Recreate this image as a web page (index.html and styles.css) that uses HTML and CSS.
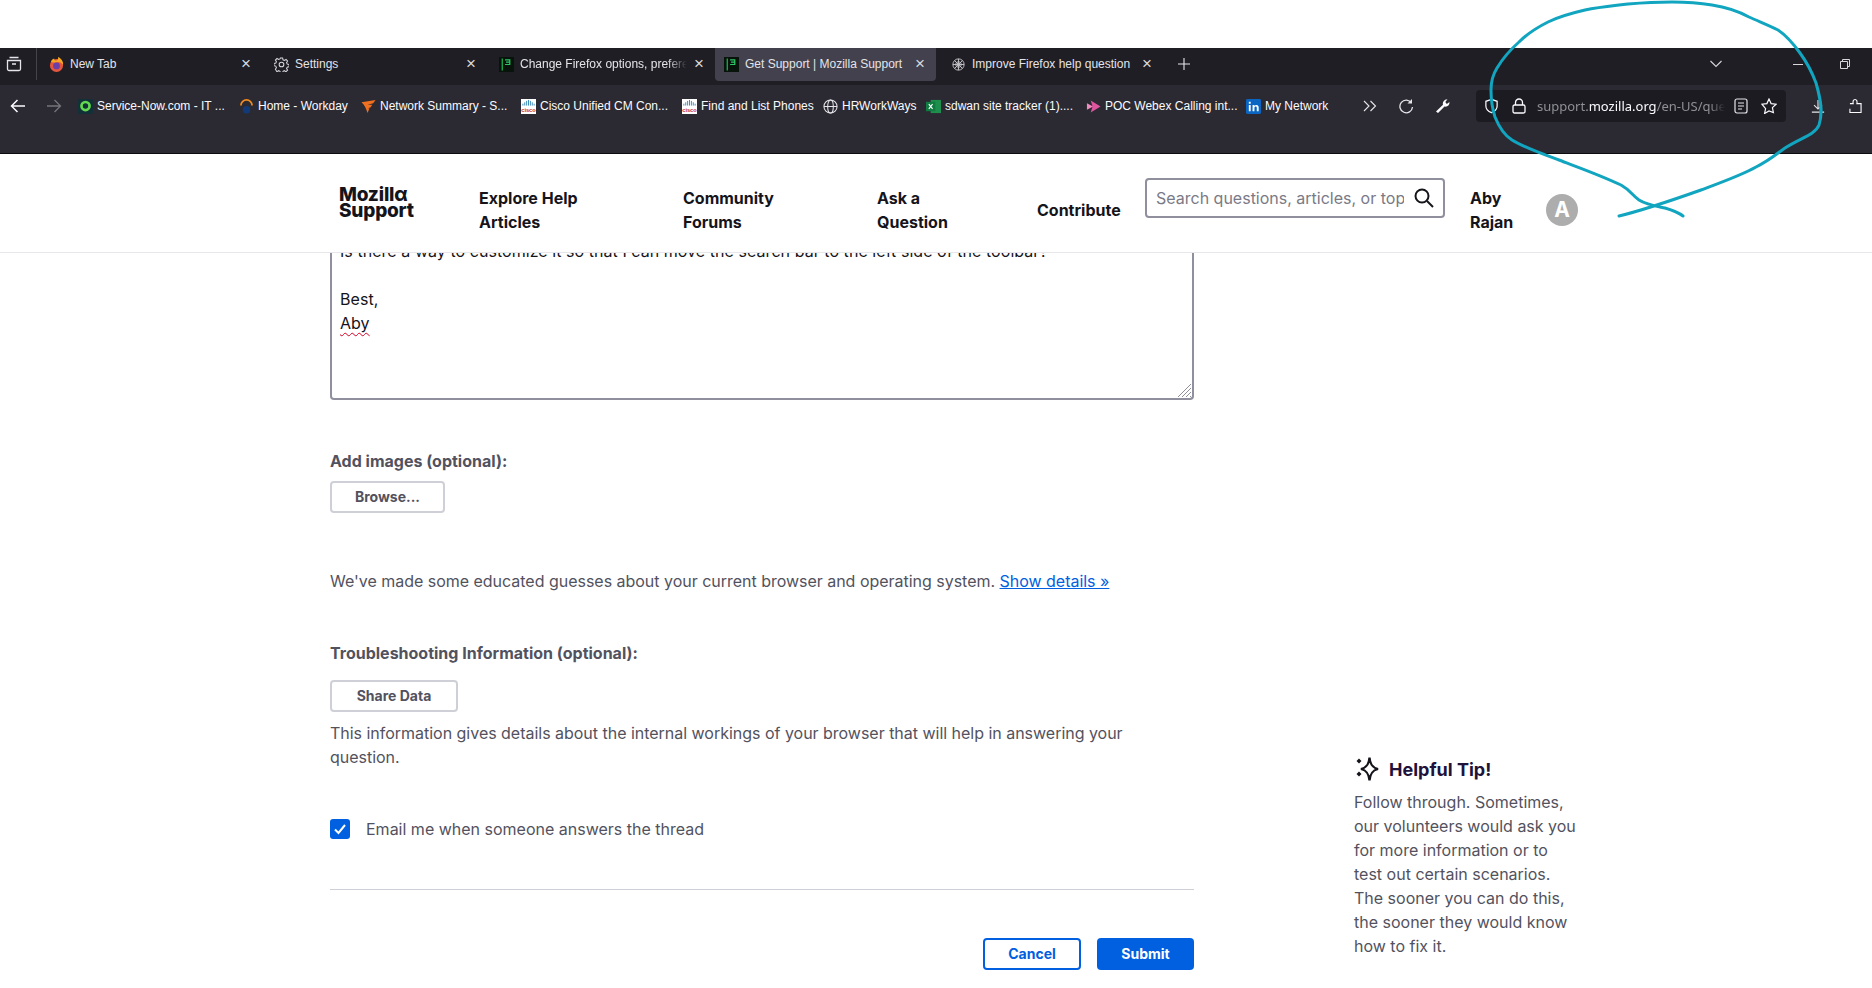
FILE: index.html
```html
<!DOCTYPE html>
<html lang="en">
<head>
<meta charset="utf-8">
<title>Get Support | Mozilla Support</title>
<link rel="stylesheet" href="styles.css">
</head>
<body>
<div class="shot-top"></div>
<div class="tabbar">
  <div class="tab-view">
    <svg class="ico16" viewBox="0 0 16 16" fill="none" stroke="#e6e6ea" stroke-width="1.3"><path d="M3.5 1.5h9M1.5 4.5h13v8.5a1.5 1.5 0 0 1-1.5 1.5H3A1.5 1.5 0 0 1 1.5 13zM6 8h4"/></svg>
  </div>
  <div class="tab t1">
    <svg class="fav" viewBox="0 0 16 16"><circle cx="8" cy="9" r="7" fill="#e4563d"/><path d="M2 5c.8-2 2-3 3.500-3.500C5.300 3 6.500 3.800 8 3.800c1 0 1.800-1.600 1.800-3.800 3 1.500 5.700 4.500 5.200 8.500C13.500 6 11 4.800 8 5.500 5 6 3 6 2 5z" fill="#f5a623"/><circle cx="8" cy="9.500" r="3.600" fill="#6a3fa8"/></svg>
    <span class="tab-title">New Tab</span><span class="tab-x">×</span>
  </div>
  <div class="tab t2">
    <svg class="fav" viewBox="0 0 16 16" fill="none" stroke="#d5d5da" stroke-width="1.100"><path d="M6.800 1h2.400l.4 2 1.500.7 1.800-1.100 1.600 1.700-1.100 1.700.7 1.600 2 .4v2.400l-2 .4-.7 1.500 1.100 1.800-1.700 1.600-1.700-1.100-1.500.7-.4 2H6.800l-.4-2-1.500-.7-1.800 1.100L1.500 13l1.100-1.700-.7-1.600-2-.4V6.900l2-.4.7-1.500L1.500 3.200l1.700-1.600L4.900 2.700l1.500-.7z"/><circle cx="8" cy="8" r="2.500"/></svg>
    <span class="tab-title">Settings</span><span class="tab-x">×</span>
  </div>
  <div class="tab t3">
    <svg class="fav" viewBox="0 0 16 16"><rect width="16" height="16" fill="#07130b"/><path d="M3.500 1.500v13" stroke="#19a34a" stroke-width="1.500"/><path d="M6.500 3h5v2.500h-4M11.500 5.500V8h-5" fill="none" stroke="#2fc766" stroke-width="1.300"/></svg>
    <span class="tab-title fade">Change Firefox options, prefere</span><span class="tab-x">×</span>
  </div>
  <div class="tab t4 active">
    <svg class="fav" viewBox="0 0 16 16"><rect width="16" height="16" fill="#07130b"/><path d="M3.500 1.500v13" stroke="#19a34a" stroke-width="1.500"/><path d="M6.500 3h5v2.500h-4M11.500 5.500V8h-5" fill="none" stroke="#2fc766" stroke-width="1.300"/></svg>
    <span class="tab-title">Get Support | Mozilla Support</span><span class="tab-x">×</span>
  </div>
  <div class="tab t5">
    <svg class="fav" viewBox="0 0 16 16" fill="none" stroke="#c4c4c9" stroke-width="1"><circle cx="8" cy="8" r="6"/><path d="M8 2v12M2 8h12M3.800 3.800l8.400 8.400M12.200 3.800l-8.400 8.400"/><circle cx="8" cy="8" r="3"/></svg>
    <span class="tab-title">Improve Firefox help question</span><span class="tab-x">×</span>
  </div>
  <svg class="tab-plus" viewBox="0 0 12 12" fill="none" stroke="#e6e6ea" stroke-width="1.100"><path d="M6 0v12M0 6h12"/></svg>
  <div class="tab-spacer"></div>
  <svg class="tab-chevron" viewBox="0 0 12 8" fill="none" stroke="#d6d6db" stroke-width="1.100"><path d="M.5 1l5.500 5.500L11.500 1"/></svg>
  <div class="win-min"></div>
  <svg class="win-restore" viewBox="0 0 10 10" fill="none" stroke="#d6d6db" stroke-width="1"><path d="M.5 2.500h7v7h-7zM2.500 2.500v-2h7v7h-2"/></svg>
</div>

<div class="toolbar">
  <svg class="nav-ico back" viewBox="0 0 16 16" fill="none" stroke="#fbfbfe" stroke-width="1.500"><path d="M15 8H1.500M7.500 2l-6 6 6 6"/></svg>
  <svg class="nav-ico fwd" viewBox="0 0 16 16" fill="none" stroke="#75747b" stroke-width="1.300"><path d="M1 8h13.500M8.500 2l6 6-6 6"/></svg>
  <div class="bookmarks">
    <div class="bm b1">
      <svg class="fav" viewBox="0 0 16 16"><rect width="16" height="16" rx="1.500" fill="#123038"/><circle cx="8" cy="7.500" r="4.300" fill="none" stroke="#62d84e" stroke-width="2.900"/></svg>
      <span>Service-Now.com - IT ...</span>
    </div>
    <div class="bm b2">
      <svg class="fav" viewBox="0 0 16 16"><path d="M2 7a6 6 0 0 1 12 0" fill="none" stroke="#f38b1d" stroke-width="1.800"/><circle cx="8" cy="11.500" r="4" fill="#123a77"/></svg>
      <span>Home - Workday</span>
    </div>
    <div class="bm b3">
      <svg class="fav" viewBox="0 0 16 16"><path d="M.5 3.500l15-2.500-2.500 3.500-6 1.500 5 0-2 3-3 .8 2 0L7 15C5.500 10 3.500 6 .5 3.500z" fill="#f0701f"/></svg>
      <span>Network Summary - S...</span>
    </div>
    <div class="bm b4">
      <svg class="fav" viewBox="0 0 16 16"><rect width="16" height="16" fill="#fff"/><path d="M2 7V5M4 7V3.500M6 7V2M8 7V1M10 7V2M12 7V3.500M14 7V5" stroke="#3a86b5"/><text class="cisco-mark" x="8" y="13.500">cisco</text></svg>
      <span>Cisco Unified CM Con...</span>
    </div>
    <div class="bm b5">
      <svg class="fav" viewBox="0 0 16 16"><rect width="16" height="16" fill="#fff"/><path d="M2 7V5M4 7V3.500M6 7V2M8 7V1M10 7V2M12 7V3.500M14 7V5" stroke="#3a86b5"/><text class="cisco-mark" x="8" y="13.500">cisco</text></svg>
      <span>Find and List Phones</span>
    </div>
    <div class="bm b6">
      <svg class="fav" viewBox="0 0 16 16" fill="none" stroke="#e6e6ea" stroke-width="1.100"><circle cx="8" cy="8" r="7"/><ellipse cx="8" cy="8" rx="3" ry="7"/><path d="M1 8h14"/></svg>
      <span>HRWorkWays</span>
    </div>
    <div class="bm b7">
      <svg class="fav" viewBox="0 0 16 16"><rect x="5" y="1" width="11" height="14" fill="#1f8f4d"/><rect y="3" width="10" height="10" fill="#107c41"/><path d="M3 5.500l4 5M7 5.500l-4 5" stroke="#fff" stroke-width="1.200"/></svg>
      <span>sdwan site tracker (1)....</span>
    </div>
    <div class="bm b8">
      <svg class="fav" viewBox="0 0 16 16"><path d="M5 1.500l10.500 6.500L5 14.500l2-6.500z" fill="#e0559f"/><path d="M1 4.500L7.500 8 1 11.500z" fill="#f08bc0"/></svg>
      <span>POC Webex Calling int...</span>
    </div>
    <div class="bm b9">
      <svg class="fav" viewBox="0 0 16 16"><rect width="16" height="16" rx="1.500" fill="#0a66c2"/><path d="M3 6.500h2V13H3zM3 3h2v2H3zM7 6.500h2v1c.5-.8 1.300-1.200 2.200-1.200 1.500 0 2.300 1 2.300 2.700v4h-2V9.300c0-.8-.4-1.200-1-1.200-.7 0-1.500.4-1.500 1.500V13H7z" fill="#fff"/></svg>
      <span>My Network</span>
    </div>
  </div>
  <svg class="tool-ico chev" viewBox="0 0 14 12" fill="none" stroke="#e6e6ea" stroke-width="1.100"><path d="M1 1l5 5-5 5M7.500 1l5 5-5 5"/></svg>
  <svg class="tool-ico reload" viewBox="0 0 16 16" fill="none" stroke="#e6e6ea" stroke-width="1.300"><path d="M13.500 5A6.300 6.300 0 1 0 14.500 9"/><path d="M14 1v4.500H9.500" fill="#e6e6ea" stroke="none"/></svg>
  <svg class="tool-ico wrench" viewBox="0 0 16 16"><path d="M1 13.500L8 6.800C7.300 4.500 9 1.300 12.500 1.300L10.300 4l1.500 2 2.700-2c.2 3.500-2.500 5.200-5 4.500L3 15z" fill="#fbfbfe"/></svg>
  <div class="urlbar">
    <svg class="url-ico shield" viewBox="0 0 16 16" fill="none" stroke="#fbfbfe" stroke-width="1.300"><path d="M8 1l6 2v5c0 3.500-3 6-6 7-3-1-6-3.500-6-7V3z"/></svg>
    <svg class="url-ico lock" viewBox="0 0 14 16" fill="none" stroke="#fbfbfe" stroke-width="1.300"><rect x="1" y="7" width="12" height="8" rx="1.500"/><path d="M3.500 7V4.500a3.500 3.500 0 0 1 7 0V7"/></svg>
    <div class="url-text"><span class="url-dim">support.</span><span class="url-host">mozilla.org</span><span class="url-dim">/en-US/questions/new</span></div>
    <svg class="url-ico reader" viewBox="0 0 14 16" fill="none" stroke="#e6e6ea" stroke-width="1.200"><rect x="1" y="1" width="12" height="14" rx="2"/><path d="M4 5h6M4 8h6M4 11h4"/></svg>
    <svg class="url-ico star" viewBox="0 0 16 16" fill="none" stroke="#fbfbfe" stroke-width="1.200"><path d="M8 1l2.100 4.600 5 .6-3.700 3.400 1 4.900L8 13l-4.400 2.500 1-4.900L.9 6.200l5-.6z"/></svg>
  </div>
  <svg class="tool-ico dl" viewBox="0 0 16 16" fill="none" stroke="#e6e6ea" stroke-width="1.300"><path d="M8 1v10M3.500 7L8 11.500 12.500 7M1 15h14"/></svg>
  <svg class="tool-ico ext" viewBox="0 0 14 16" fill="none" stroke="#fbfbfe" stroke-width="1.200"><path d="M1 5.500h3.500C4 3 4.500 1 6.500 1s2.500 2 2 4.500H13V15H1V11"/></svg>
</div>

<header class="site-header">
  <a class="logo">Mozillα<br>Support</a>
  <nav class="nav-link n1">Explore Help<br>Articles</nav>
  <nav class="nav-link n2">Community<br>Forums</nav>
  <nav class="nav-link n3">Ask a<br>Question</nav>
  <nav class="nav-link n4">Contribute</nav>
  <div class="search">
    <div class="search-ph">Search questions, articles, or topics</div>
    <svg class="search-ico" viewBox="0 0 20 20" fill="none" stroke="#15141a" stroke-width="2"><circle cx="8" cy="8" r="6.500"/><path d="M13 13l6 6"/></svg>
  </div>
  <div class="nav-link user">Aby<br>Rajan</div>
  <div class="avatar">A</div>
</header>

<main class="page">
  <section class="form">
    <div class="textarea">
      <p>Is there a way to customize it so that I can move the search bar to the left side of the toolbar?</p>
      <p class="gap">Best,</p>
      <p><span class="spell">Aby</span></p>
      <svg class="grip" viewBox="0 0 14 14" stroke="#8f8f9d" stroke-width="1"><path d="M1 14L14 1M5 14l9-9M9 14l5-5M13 14l1-1"/></svg>
    </div>
    <h3 class="label add-images">Add images (optional):</h3>
    <button class="btn-light browse">Browse...</button>
    <p class="copy guesses">We've made some educated guesses about your current browser and operating system. <a class="link">Show details »</a></p>
    <h3 class="label trouble">Troubleshooting Information (optional):</h3>
    <button class="btn-light share">Share Data</button>
    <p class="copy info">This information gives details about the internal workings of your browser that will help in answering your question.</p>
    <div class="check-row">
      <span class="check"><svg viewBox="0 0 20 20" fill="none" stroke="#fff" stroke-width="2"><path d="M5 10.500l3.500 3.500L15 6"/></svg></span>
      <span class="check-label">Email me when someone answers the thread</span>
    </div>
    <hr class="rule">
    <div class="actions">
      <button class="btn-outline">Cancel</button>
      <button class="btn-primary">Submit</button>
    </div>
  </section>
  <aside class="tip">
    <div class="tip-head">
      <svg class="tip-ico" viewBox="0 0 26 26" fill="none" stroke="#15141a" stroke-width="2.300"><path d="M15.500 1.500c.6 6.500 2.500 10 8.500 11.500-6 1.500-7.900 5-8.500 11.500-.6-6.500-2.500-10-8.500-11.500 6-1.500 7.900-5 8.500-11.500z"/><path d="M5 2.500l2.500 2.500L5 7.500 2.500 5zM5 15.500l2.500 2.500L5 20.500 2.500 18z" fill="#15141a" stroke="none"/></svg>
      <h3 class="tip-title">Helpful Tip!</h3>
    </div>
    <p class="tip-text">Follow through. Sometimes, our volunteers would ask you for more information or to test out certain scenarios. The sooner you can do this, the sooner they would know how to fix it.</p>
  </aside>
</main>

<svg class="scribble" viewBox="0 0 1872 988" fill="none" stroke="#12a5c0" stroke-width="3" stroke-linecap="round" stroke-linejoin="round">
  <path d="M1619 216C1640 211 1670 201 1701 190C1725 181 1742 175 1756 167C1770 160 1775 155 1785 148C1800 138 1815 135 1819 125C1823 113 1821 100 1816 83C1812 72 1808 64 1800 53C1792 42 1787 36 1778 30C1768 25 1760 22 1749 17C1738 11 1725 7 1712 5C1700 3 1685 2 1672 2C1655 2 1640 3 1628 4C1612 6 1600 7 1585 10C1572 13 1560 16 1548 22C1538 27 1528 33 1519 42C1510 50 1503 58 1497 68C1492 76 1491 82 1491 90C1491 100 1492 108 1495 117C1499 127 1504 135 1512 140C1525 148 1540 153 1559 160C1580 168 1600 175 1621 185C1630 190 1632 195 1639 200C1647 205 1655 206 1665 208C1672 210 1678 212 1683 216"/>
</svg>
</body>
</html>
```
FILE: styles.css
```css
* { box-sizing: border-box; }
html, body { margin: 0; height: 988px; overflow: hidden; background: #fff; }
body { font-family: Inter, "Noto Sans", sans-serif; position: relative; }
h3, p { margin: 0; }

.shot-top { height: 48px; background: #fff; }

/* tab strip */
.tabbar {
  height: 37px; background: #1f1e25; display: flex; align-items: center; padding-bottom: 5px;
  color: #e4e4e8; font: 12px/16px "Liberation Sans", Arial, sans-serif;
}
.tab-view { width: 37px; height: 32px; border-right: 1px solid #45444c; display: flex; align-items: center; padding-left: 6px; }
.ico16 { width: 16px; height: 16px; }
.fav { width: 15px; height: 15px; flex: none; }
.cisco-mark { font: 700 6px "Liberation Sans", Arial, sans-serif; fill: #c0272d; text-anchor: middle; }
.tab { height: 32px; display: flex; align-items: center; padding-left: 12px; gap: 6px; position: relative; flex: none; }
.t1 { width: 225px; }
.t2 { width: 225px; }
.t3 { width: 228px; }
.t4 { width: 221px; height: 33px; padding-left: 9px; gap: 6px; background: #42414d; border-radius: 0 0 4px 4px; }
.t5 { width: 224px; margin-left: 3px; padding-left: 12px; }
.tab-title { flex: 1; white-space: nowrap; overflow: hidden; min-width: 0; }
.fade { -webkit-mask-image: linear-gradient(to right, #000 88%, transparent); mask-image: linear-gradient(to right, #000 88%, transparent); }
.tab-x { width: 12px; margin-right: 10px; font-size: 17px; text-align: center; color: #d8d8dc; }
.tab-plus { width: 12px; height: 12px; margin-left: 15px; }
.tab-spacer { flex: 1; }
.tab-chevron { width: 12px; height: 8px; margin-right: 71px; }
.win-min { width: 10px; height: 1px; background: #d6d6db; margin-right: 37px; }
.win-restore { width: 10px; height: 10px; margin-right: 22px; }

/* toolbar */
.toolbar {
  height: 69px; background: #2b2a33; border-bottom: 1px solid #0c0c0d;
  display: flex; align-items: flex-start; padding-top: 5px;
  color: #fbfbfe; font: 12px/32px "Liberation Sans", Arial, sans-serif;
}
.nav-ico, .tool-ico, .url-ico { flex: none; margin-top: 8px; height: 16px; }
.nav-ico { width: 16px; }
.back { margin-left: 10px; }
.fwd { margin-left: 20px; }
.bookmarks { display: flex; margin-left: 16px; width: 1290px; flex: none; }
.bm { display: flex; align-items: center; gap: 4px; height: 32px; white-space: nowrap; flex: none; }
.bm span { display: block; }
.b1 { width: 161px; }
.b2 { width: 122px; }
.b3 { width: 160px; }
.b4 { width: 161px; }
.b5 { width: 141px; }
.b6 { width: 103px; }
.b7 { width: 160px; }
.b8 { width: 160px; }
.chev { width: 14px; margin-left: -5px; }
.reload { width: 16px; margin-left: 21px; }
.wrench { width: 16px; margin-left: 21px; }
.urlbar {
  width: 310px; height: 32px; margin-left: 25px; background: #1c1b22; border-radius: 4px;
  display: flex; align-items: flex-start; padding-left: 8px; flex: none;
}
.shield { width: 15px; }
.lock { width: 14px; margin-left: 13px; }
.url-text { width: 188px; margin-left: 11px; overflow: hidden; white-space: nowrap; font: 13px/32px "Noto Sans", sans-serif; -webkit-mask-image: linear-gradient(to right, #000 92%, transparent); mask-image: linear-gradient(to right, #000 92%, transparent); }
.url-dim { color: #8f8f96; }
.url-host { color: #fbfbfe; }
.reader { width: 14px; margin-left: 9px; }
.star { width: 16px; margin-left: 13px; }
.dl { width: 14px; margin-left: 25px; }
.ext { width: 13px; margin-left: 24px; }

/* site header */
.site-header {
  height: 99px; border-bottom: 1px solid #e6e6eb; background: #fff; position: relative; z-index: 2;
  display: flex; align-items: center; padding: 13px 0 0 339px;
}
.logo { font-size: 19px; line-height: 16px; font-weight: 800; color: #15141a; width: 140px; margin-top: -14px; letter-spacing: -.2px; }
.nav-link { font-size: 16px; line-height: 24px; font-weight: 650; color: #15141a; flex: none; }
.n1 { width: 204px; }
.n2 { width: 194px; }
.n3 { width: 160px; }
.n4 { width: 108px; }
.search {
  width: 300px; height: 40px; margin-top: -24px; border: 2px solid #8f8f9d; border-radius: 4px;
  display: flex; align-items: center; padding-left: 9px; flex: none;
}
.search-ph { width: 248px; overflow: hidden; white-space: nowrap; font-size: 16px; color: #7a7a86; }
.search-ico { width: 20px; height: 20px; margin-left: 10px; }
.user { margin-left: 25px; width: 76px; }
.avatar { width: 32px; height: 32px; border-radius: 50%; background: #adadad; color: #fff; font-weight: 700; font-size: 21px; display: flex; align-items: center; justify-content: center; }

/* page */
.page { display: flex; height: 735px; overflow: hidden; padding-left: 330px; }
.form { width: 864px; flex: none; color: #52525e; }
.textarea {
  height: 161px; margin-top: -14px; padding: 0 8px; position: relative; border: 2px solid #8f8f9d;
  border-top: none; border-radius: 0 0 4px 4px; color: #15141a; font-size: 16px; line-height: 24px; letter-spacing: .05px;
}
.gap { margin-top: 24px; }
.spell { text-decoration: underline wavy #d70022 1px; text-underline-offset: 3px; }
.grip { position: absolute; right: 1px; bottom: 1px; width: 14px; height: 14px; }
.label { font-size: 16px; line-height: 24px; font-weight: 700; }
.add-images { margin-top: 49px; }
.btn-light { display: block; height: 32px; border: 2px solid #cfcfd8; border-radius: 4px; background: #fff; color: #52525e; font: 700 14px Inter, sans-serif; padding: 0 0 2px; }
.browse { width: 115px; margin-top: 8px; }
.copy { font-size: 16px; line-height: 24px; letter-spacing: -.02px; }
.guesses { margin-top: 56px; }
.link { color: #0060df; text-decoration: underline; }
.trouble { margin-top: 48px; }
.share { width: 128px; margin-top: 15px; }
.info { margin-top: 9px; }
.check-row { display: flex; align-items: center; margin-top: 48px; }
.check { width: 20px; height: 20px; border-radius: 3px; background: #0060df; display: block; flex: none; }
.check svg { display: block; }
.check-label { margin-left: 16px; font-size: 16px; line-height: 24px; }
.rule { border: 0; height: 1px; background: #cfcfd8; margin: 48px 0 0; }
.actions { display: flex; justify-content: flex-end; gap: 16px; margin-top: 48px; }
.btn-outline, .btn-primary { width: 98px; height: 32px; border-radius: 4px; font: 700 14px Inter, sans-serif; padding: 0 0 2px; }
.btn-outline { border: 2px solid #0060df; background: #fff; color: #0060df; }
.btn-primary { width: 97px; border: 0; background: #0060df; color: #fff; }

.tip { margin-left: 160px; margin-top: 503px; width: 226px; flex: none; }
.tip-head { display: flex; align-items: center; gap: 9px; height: 26px; }
.tip-ico { width: 26px; height: 26px; }
.tip-title { font-size: 18px; font-weight: 700; color: #20123a; }
.tip-text { margin-top: 8px; font-size: 16px; line-height: 24px; color: #52525e; }

.scribble { position: absolute; left: 0; top: 0; width: 1872px; height: 988px; z-index: 5; pointer-events: none; }
```
